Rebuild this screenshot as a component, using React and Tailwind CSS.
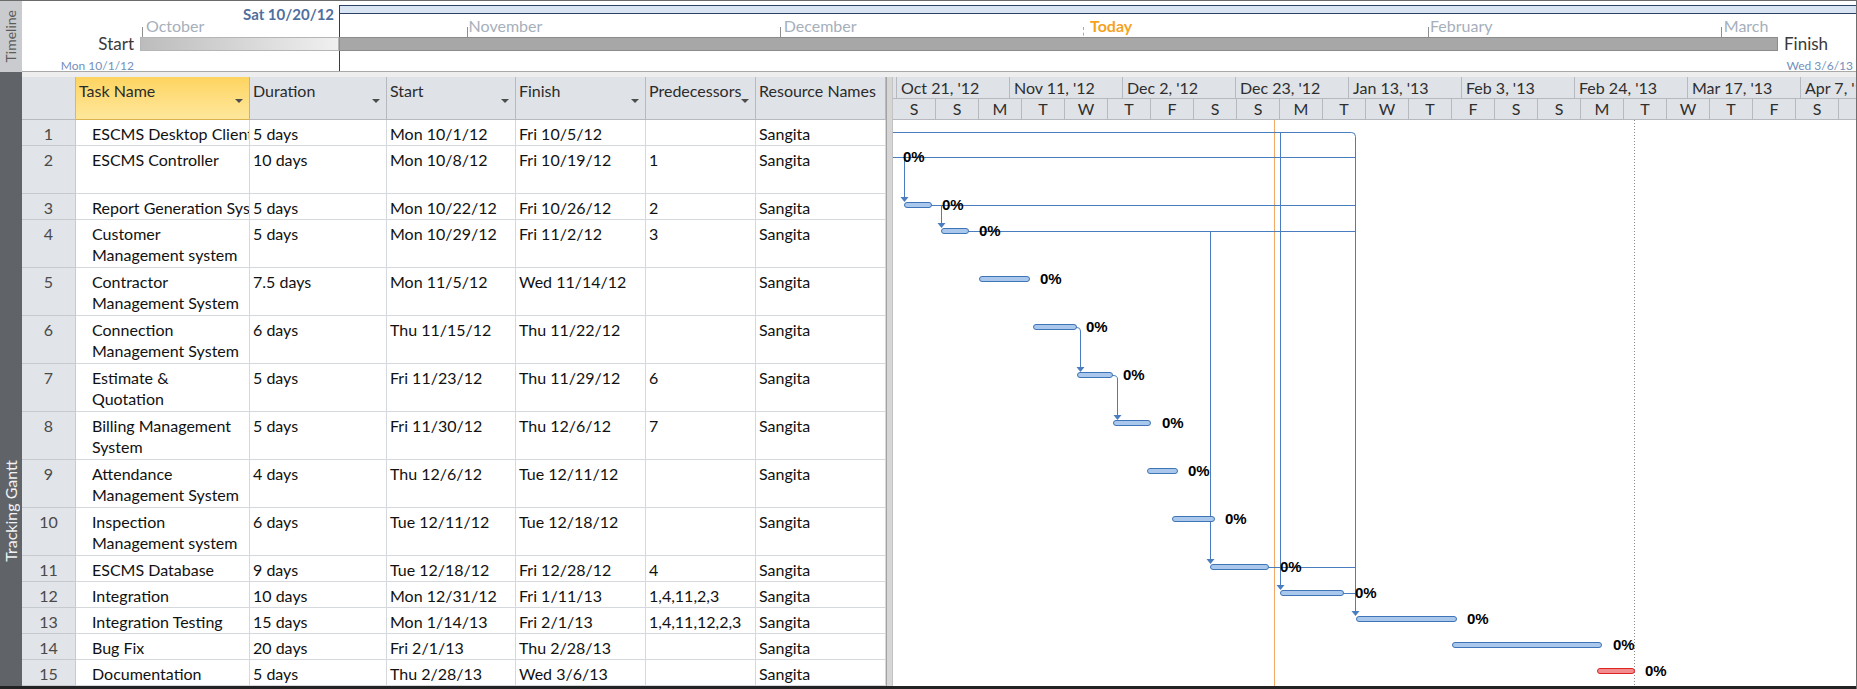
import React from 'react';

const COLS = 'grid grid-cols-[54px_174px_137px_129px_130px_110px_130px]';

const tasks = [
  { id: 1, name: ['ESCMS Desktop Client'], dur: '5 days', start: 'Mon 10/1/12', finish: 'Fri 10/5/12', pred: '' },
  { id: 2, name: ['ESCMS Controller'], dur: '10 days', start: 'Mon 10/8/12', finish: 'Fri 10/19/12', pred: '1', tall: true },
  { id: 3, name: ['Report Generation System'], dur: '5 days', start: 'Mon 10/22/12', finish: 'Fri 10/26/12', pred: '2' },
  { id: 4, name: ['Customer', 'Management system'], dur: '5 days', start: 'Mon 10/29/12', finish: 'Fri 11/2/12', pred: '3', tall: true },
  { id: 5, name: ['Contractor', 'Management System'], dur: '7.5 days', start: 'Mon 11/5/12', finish: 'Wed 11/14/12', pred: '', tall: true },
  { id: 6, name: ['Connection', 'Management System'], dur: '6 days', start: 'Thu 11/15/12', finish: 'Thu 11/22/12', pred: '', tall: true },
  { id: 7, name: ['Estimate &', 'Quotation'], dur: '5 days', start: 'Fri 11/23/12', finish: 'Thu 11/29/12', pred: '6', tall: true },
  { id: 8, name: ['Billing Management', 'System'], dur: '5 days', start: 'Fri 11/30/12', finish: 'Thu 12/6/12', pred: '7', tall: true },
  { id: 9, name: ['Attendance', 'Management System'], dur: '4 days', start: 'Thu 12/6/12', finish: 'Tue 12/11/12', pred: '', tall: true },
  { id: 10, name: ['Inspection', 'Management system'], dur: '6 days', start: 'Tue 12/11/12', finish: 'Tue 12/18/12', pred: '', tall: true },
  { id: 11, name: ['ESCMS Database'], dur: '9 days', start: 'Tue 12/18/12', finish: 'Fri 12/28/12', pred: '4' },
  { id: 12, name: ['Integration'], dur: '10 days', start: 'Mon 12/31/12', finish: 'Fri 1/11/13', pred: '1,4,11,2,3' },
  { id: 13, name: ['Integration Testing'], dur: '15 days', start: 'Mon 1/14/13', finish: 'Fri 2/1/13', pred: '1,4,11,12,2,3' },
  { id: 14, name: ['Bug Fix'], dur: '20 days', start: 'Fri 2/1/13', finish: 'Thu 2/28/13', pred: '' },
  { id: 15, name: ['Documentation'], dur: '5 days', start: 'Thu 2/28/13', finish: 'Wed 3/6/13', pred: '' },
];

const headers = [
  { label: '' },
  { label: 'Task Name', arrow: true, active: true },
  { label: 'Duration', arrow: true },
  { label: 'Start', arrow: true },
  { label: 'Finish', arrow: true },
  { label: 'Predecessors', arrow: true },
  { label: 'Resource Names' },
];

const topTier = ["Oct 21, '12", "Nov 11, '12", "Dec 2, '12", "Dec 23, '12", "Jan 13, '13", "Feb 3, '13", "Feb 24, '13", "Mar 17, '13"];
const bottomTier = 'S S M T W T F S S M T W T F S S M T W T F S'.split(' ');

// gantt coords: origin at x=893, y=120 of the page
const bars = [
  [11, 38, 85], [48, 75, 111], [86, 136, 159], [140, 183, 207], [184, 219, 255],
  [220, 257, 303], [254, 284, 351], [279, 321, 399], [317, 375, 447], [387, 450, 473],
  [463, 563, 499], [559, 708, 525], [704, 741, 551, true],
];

const labels = [
  [10, 37], [49, 85], [86, 111], [147, 159], [193, 207], [230, 255], [269, 303],
  [295, 351], [332, 399], [387, 447], [462, 473], [574, 499], [720, 525], [752, 551],
];

const links = [
  'M0 12.5 H458.5 Q462.5 12.5 462.5 16.5 V492',
  'M387.5 12.5 V466',
  'M0 37.5 H462.5',
  'M11.5 37.5 V78',
  'M38 85.5 H462.5',
  'M48.5 85.5 V104',
  'M75 111.5 H462.5',
  'M317.5 111.5 V440',
  'M375 447.5 H462.5',
  'M450 473.5 H462.5',
  'M183 207.5 H184 Q187.5 207.5 187.5 211 V248',
  'M219 255.5 H220 Q224.5 255.5 224.5 259 V296',
];

const arrows = [[11.5, 82], [48.5, 108], [187.5, 252], [224.5, 300], [317.5, 444], [387.5, 470], [462.5, 496]];

const months = [
  ['October', 124, 119.6],
  ['November', 446.6, 444.6],
  ['December', 761.7, 758],
  ['February', 1408, 1406.3],
  ['March', 1701.8, 1698.6],
];

const DropArrow = () => (
  <span className="mt-[19px] w-0 h-0 shrink-0 border-x-[4px] border-x-transparent border-t-[4px] border-t-[#4d4d4d]" />
);

const Cell = ({ children, indent }) => (
  <div
    className={`border-r border-b border-[#d5d8dc] pt-[3px] leading-[21px] whitespace-nowrap overflow-hidden ${
      indent ? 'pl-4' : 'pl-[3px]'
    }`}
  >
    {children}
  </div>
);

const Timeline = () => (
  <div className="flex h-[71px] shrink-0">
    <div className="w-[22px] shrink-0 bg-[#c9cbce] flex items-center justify-center">
      <span className="[writing-mode:vertical-rl] rotate-180 text-[14px] text-[#5b5b5b] leading-none">Timeline</span>
    </div>
    <div className="relative flex-1 bg-white border-b border-[#a9a9a9] overflow-hidden">
      <div className="absolute left-[317px] right-0 top-[4px] h-[9px] bg-[#d9e5f2] border-y border-[#2b4266]" />
      <div className="absolute left-[317px] top-[4px] bottom-0 w-px bg-[#3c3c3c]" />
      <div className="absolute left-[221px] top-[5px] text-[15px] font-bold leading-4 text-[#4f6f9e]">Sat 10/20/12</div>
      {months.map(([m, x, t]) => (
        <React.Fragment key={m}>
          <div className="absolute top-[17px] text-[16px] leading-4 text-[#a6afbb]" style={{ left: x }}>{m}</div>
          <div className="absolute top-[26px] h-[10px] w-px bg-[#8f8f8f]" style={{ left: t }} />
        </React.Fragment>
      ))}
      <div className="absolute left-[1068px] top-[17px] text-[16px] font-bold leading-4 text-[#f5a31f]">Today</div>
      <div className="absolute left-[1061px] top-[26px] h-[20px] border-l border-dashed border-[#f5a31f]" />
      <div className="absolute left-[118px] top-[36px] h-[14px] w-[199px] bg-linear-to-r from-[#bcbcbc] to-[#f0f0f0] border border-[#b5b5b5]" />
      <div className="absolute left-[317px] top-[36px] h-[14px] w-[1439px] bg-[#a7a7a7] border border-[#8c8c8c]" />
      <div className="absolute left-0 w-[112px] top-[34px] text-right text-[17px] leading-[18px] text-[#3a3a3a]">Start</div>
      <div className="absolute left-[1762px] top-[34px] text-[17px] leading-[18px] text-[#3a3a3a]">Finish</div>
      <div className="absolute left-0 w-[112px] top-[58px] text-right text-[12px] leading-[14px] text-[#7390bd]">Mon 10/1/12</div>
      <div className="absolute right-[3px] top-[58px] text-[12px] leading-[14px] text-[#7390bd]">Wed 3/6/13</div>
    </div>
  </div>
);

const TaskTable = () => (
  <div className="w-[864px] shrink-0 flex flex-col text-[16px] text-[#111]">
    <div className={`${COLS} h-[43px] shrink-0`}>
      {headers.map((h, i) => (
        <div
          key={i}
          className={`flex justify-between items-start border-r border-b pl-[3px] pr-[6px] pt-[3px] leading-[21px] whitespace-nowrap overflow-hidden text-[#2b2b2b] ${
            h.active ? 'bg-linear-to-b from-[#fdd45e] to-[#fee79b] border-[#dcb24c]' : 'bg-[#dfe2e7] border-[#b6bac0]'
          }`}
        >
          <span>{h.label}</span>
          {h.arrow && <DropArrow />}
        </div>
      ))}
    </div>
    {tasks.map((t) => (
      <div key={t.id} className={`${COLS} shrink-0 ${t.tall ? 'h-[48px]' : 'h-[26px]'}`}>
        <div className="bg-[#e1e4e8] border-r border-b border-[#c6cacf] text-center text-[#4a4a4a] pt-[3px] leading-[21px]">
          {t.id}
        </div>
        <Cell indent>
          {t.name.map((n) => (
            <div key={n}>{n}</div>
          ))}
        </Cell>
        <Cell>{t.dur}</Cell>
        <Cell>{t.start}</Cell>
        <Cell>{t.finish}</Cell>
        <Cell>{t.pred}</Cell>
        <Cell>Sangita</Cell>
      </div>
    ))}
  </div>
);

const GanttChart = () => (
  <div className="flex-1 flex flex-col min-w-0">
    <div className="h-[43px] shrink-0 flex flex-col bg-[#dfe2e7] text-[16px] text-[#2e2e2e] border-b border-[#b6bac0] overflow-hidden">
      <div className="flex h-[22px] border-b border-[#b6bac0]">
        <div className="w-[4px] shrink-0 border-r border-[#b6bac0]" />
        {topTier.map((d) => (
          <div key={d} className="w-[113px] shrink-0 border-r border-[#b6bac0] pl-[4px] leading-[21px] whitespace-nowrap">
            {d}
          </div>
        ))}
        <div className="flex-1 pl-[4px] leading-[21px] whitespace-nowrap overflow-hidden">Apr 7, '13</div>
      </div>
      <div className="flex flex-1">
        {bottomTier.map((d, i) => (
          <div key={i} className="w-[43px] shrink-0 border-r border-[#b6bac0] text-center leading-[20px]">
            {d}
          </div>
        ))}
        <div className="flex-1" />
      </div>
    </div>
    <div className="relative flex-1 bg-white">
      <svg className="absolute inset-0" width="963" height="566" viewBox="0 0 963 566">
        <line x1="381.5" y1="0" x2="381.5" y2="566" stroke="#f2a868" strokeWidth="1" />
        <line x1="741.5" y1="0" x2="741.5" y2="566" stroke="#8a8a8a" strokeWidth="1" strokeDasharray="1 2" />
        {links.map((d, i) => (
          <path key={i} d={d} fill="none" stroke="#4a7dbf" strokeWidth="1" />
        ))}
        {bars.map(([x1, x2, cy, red], i) => (
          <rect
            key={i}
            x={x1 + 0.5}
            y={cy - 2.5}
            width={x2 - x1}
            height="5"
            rx="2.5"
            fill={red ? '#f28d8d' : '#a9c8ec'}
            stroke={red ? '#dc2222' : '#3f74b6'}
            strokeWidth="1"
          />
        ))}
        {arrows.map(([x, tip], i) => (
          <polygon key={i} points={`${x - 4},${tip - 5} ${x + 4},${tip - 5} ${x},${tip}`} fill="#4a7dbf" />
        ))}
        {labels.map(([x, cy], i) => (
          <text
            key={i}
            x={x}
            y={cy + 5}
            fontFamily="'Liberation Sans', Arial, sans-serif"
            fontWeight="bold"
            fontSize="15"
            fill="#000"
          >
            0%
          </text>
        ))}
      </svg>
    </div>
  </div>
);

export default function App() {
  return (
    <div className="w-[1857px] h-[689px] flex flex-col overflow-hidden bg-white border-r border-[#6d6d6d] [font-family:Lato,'Open_Sans',sans-serif]">
      <div className="h-px shrink-0 bg-[#6b6b6b]" />
      <Timeline />
      <div className="flex flex-1 min-h-0">
        <div className="w-[22px] shrink-0 bg-[#606469] flex flex-col justify-end items-center pb-[124px]">
          <span className="[writing-mode:vertical-rl] rotate-180 text-[16px] text-[#f2f2f2] leading-none whitespace-nowrap">
            Tracking Gantt
          </span>
        </div>
        <div className="flex-1 flex flex-col min-w-0">
          <div className="h-[5px] shrink-0 bg-[#eeeeee]" />
          <div className="flex flex-1 min-h-0">
            <TaskTable />
            <div className="w-[7px] shrink-0 bg-[#d6d6d6] border-l border-[#a3a3a3] border-r border-r-[#c2c2c2]" />
            <GanttChart />
          </div>
        </div>
      </div>
      <div className="h-[3px] shrink-0 bg-[#232323]" />
    </div>
  );
}
